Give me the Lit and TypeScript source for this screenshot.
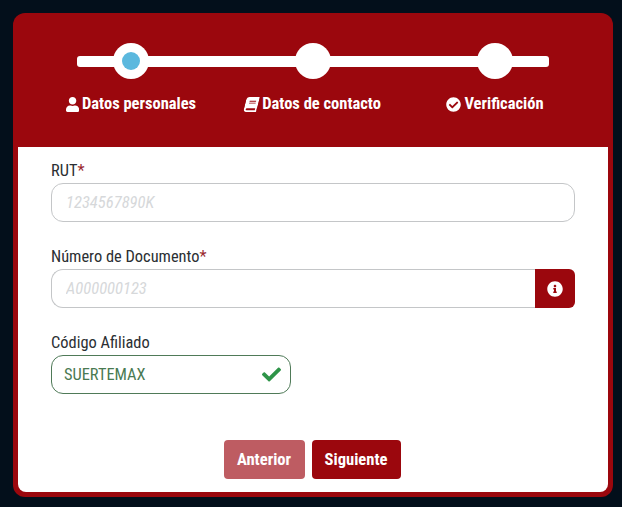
import { LitElement, html, css, svg } from "lit";
import { customElement } from "lit/decorators.js";

const user = svg`<path d="M224 256c70.7 0 128-57.3 128-128S294.7 0 224 0 96 57.3 96 128s57.3 128 128 128zm89.6 32h-16.7c-22.2 10.2-46.9 16-72.9 16s-50.6-5.8-72.9-16h-16.7C60.2 288 0 348.2 0 422.4V464c0 26.5 21.5 48 48 48h352c26.5 0 48-21.5 48-48v-41.6c0-74.2-60.2-134.4-134.4-134.4z"/>`;
const book = svg`<path d="M448 360V24c0-13.3-10.7-24-24-24H96C43 0 0 43 0 96v320c0 53 43 96 96 96h328c13.3 0 24-10.7 24-24v-16c0-7.5-3.5-14.3-8.9-18.7-4.2-15.4-4.2-59.3 0-74.7 5.4-4.3 8.9-11.1 8.9-18.6zM128 134c0-3.3 2.7-6 6-6h212c3.3 0 6 2.7 6 6v20c0 3.3-2.7 6-6 6H134c-3.3 0-6-2.7-6-6v-20zm0 64c0-3.3 2.7-6 6-6h212c3.3 0 6 2.7 6 6v20c0 3.3-2.7 6-6 6H134c-3.3 0-6-2.7-6-6v-20zm253.4 250H96c-17.7 0-32-14.3-32-32 0-17.6 14.4-32 32-32h285.4c-1.9 17.1-1.9 46.9 0 64z"/>`;
const checkCircle = svg`<path d="M504 256c0 136.967-111.033 248-248 248S8 392.967 8 256 119.033 8 256 8s248 111.033 248 248zM227.314 387.314l184-184c6.248-6.248 6.248-16.379 0-22.627l-22.627-22.627c-6.248-6.249-16.379-6.249-22.628 0L216 308.118l-70.059-70.059c-6.248-6.248-16.379-6.248-22.628 0l-22.627 22.627c-6.248 6.248-6.248 16.379 0 22.627l104 104c6.249 6.249 16.379 6.249 22.628.001z"/>`;
const info = svg`<path d="M256 8C119.043 8 8 119.083 8 256c0 136.997 111.043 248 248 248s248-111.003 248-248C504 119.083 392.957 8 256 8zm0 110c23.196 0 42 18.804 42 42s-18.804 42-42 42-42-18.804-42-42 18.804-42 42-42zm56 254c0 6.627-5.373 12-12 12h-88c-6.627 0-12-5.373-12-12v-24c0-6.627 5.373-12 12-12h12v-64h-12c-6.627 0-12-5.373-12-12v-24c0-6.627 5.373-12 12-12h64c6.627 0 12 5.373 12 12v100h12c6.627 0 12 5.373 12 12v24z"/>`;
const check = svg`<path d="M173.898 439.404l-166.4-166.4c-9.997-9.997-9.997-26.206 0-36.204l36.203-36.204c9.997-9.998 26.207-9.998 36.204 0L192 312.69 432.095 72.596c9.997-9.997 26.207-9.997 36.204 0l36.203 36.204c9.997 9.997 9.997 26.206 0 36.204l-294.4 294.401c-9.998 9.997-26.207 9.997-36.204-.001z"/>`;

@customElement("app-root")
export class AppRoot extends LitElement {
  static styles = css`
    :host {
      display: block;
      width: 622px;
      height: 507px;
      box-sizing: border-box;
      padding: 13px 9px 10px 13px;
      background: #030f1b;
      font-family: Roboto, "Liberation Sans", sans-serif;
      font-stretch: 85%;
      overflow: hidden;
    }
    .card {
      height: 484px;
      box-sizing: border-box;
      background: #9b070d;
      border-radius: 12px;
      padding: 0 5px 5px;
      display: flex;
      flex-direction: column;
    }
    .head {
      height: 134px;
      flex: none;
      box-sizing: border-box;
      padding: 30px 22px 0;
    }
    .track {
      position: relative;
      display: grid;
      grid-template-columns: repeat(3, 182px);
      height: 36px;
    }
    .track::before {
      content: "";
      position: absolute;
      left: 37px;
      width: 472px;
      top: 13px;
      height: 11px;
      border-radius: 3px;
      background: #fff;
    }
    .node {
      position: relative;
      justify-self: center;
      width: 36px;
      height: 36px;
      border-radius: 50%;
      background: #fff;
      display: flex;
      align-items: center;
      justify-content: center;
    }
    .dot {
      width: 18px;
      height: 18px;
      border-radius: 50%;
      background: #5bb8de;
    }
    .labels {
      display: grid;
      grid-template-columns: repeat(3, 182px);
      margin-top: 13px;
    }
    .step {
      display: flex;
      align-items: center;
      justify-content: center;
      gap: 3px;
      color: #fff;
      font-size: 16.5px;
      line-height: 24px;
      font-weight: 700;
      white-space: nowrap;
    }
    .step svg {
      height: 15px;
      width: auto;
      fill: #fff;
      flex: none;
    }
    .step svg.skew {
      transform: skewX(-14deg);
      margin-right: 1px;
    }
    .body {
      flex: 1;
      background: #fff;
      border-radius: 0 0 8px 8px;
      padding: 14px 33px 0;
      display: flex;
      flex-direction: column;
    }
    .field {
      height: 86px;
      flex: none;
    }
    label {
      display: block;
      height: 22px;
      font-size: 16.4px;
      line-height: 20px;
      color: #2b2f33;
    }
    label span {
      color: #9b2a30;
    }
    .control {
      display: flex;
      height: 39px;
    }
    input {
      flex: 1;
      min-width: 0;
      box-sizing: border-box;
      height: 39px;
      border: 1px solid #c4c6c8;
      border-radius: 12px;
      padding: 0 14px;
      font: 400 16.6px Roboto, "Liberation Sans", sans-serif;
      font-stretch: 85%;
      outline: none;
      background: #fff;
    }
    input::placeholder {
      color: #d6d8da;
      font-style: italic;
      opacity: 1;
    }
    .grouped input {
      border-radius: 12px 0 0 12px;
      border-right: 0;
    }
    .addon {
      width: 40px;
      flex: none;
      box-sizing: border-box;
      background: #9b070d;
      border-radius: 0 6px 6px 0;
      display: flex;
      align-items: center;
      justify-content: center;
    }
    .addon svg {
      width: 16px;
      height: 16px;
      fill: #fff;
    }
    .valid {
      position: relative;
      width: 240px;
    }
    .valid input {
      width: 100%;
      border-color: #4f7a58;
      color: #4a7a52;
      padding-left: 12px;
      padding-right: 38px;
      font-size: 16.4px;
    }
    .valid svg {
      position: absolute;
      right: 10px;
      top: 10px;
      width: 19px;
      height: 19px;
      fill: #2e9448;
    }
    .actions {
      display: flex;
      justify-content: center;
      gap: 7px;
      margin-top: 21px;
      margin-left: -2px;
    }
    button {
      height: 39px;
      border: 0;
      border-radius: 4px;
      color: #fff;
      background: #9b070d;
      font: 700 16.6px Roboto, "Liberation Sans", sans-serif;
      font-stretch: 85%;
      padding: 0;
    }
    .prev {
      width: 81px;
      background: #be5c62;
    }
    .next {
      width: 89px;
    }
  `;

  render() {
    return html`
      <div class="card">
        <div class="head">
          <div class="track">
            <div class="node"><div class="dot"></div></div>
            <div class="node"></div>
            <div class="node"></div>
          </div>
          <div class="labels">
            <div class="step"><svg viewBox="0 0 448 512">${user}</svg>Datos personales</div>
            <div class="step"><svg class="skew" viewBox="0 0 448 512">${book}</svg>Datos de contacto</div>
            <div class="step"><svg viewBox="0 0 512 512">${checkCircle}</svg>Verificación</div>
          </div>
        </div>
        <div class="body">
          <div class="field">
            <label>RUT<span>*</span></label>
            <div class="control"><input placeholder="1234567890K" /></div>
          </div>
          <div class="field">
            <label>Número de Documento<span>*</span></label>
            <div class="control grouped">
              <input placeholder="A000000123" />
              <div class="addon"><svg viewBox="0 0 512 512">${info}</svg></div>
            </div>
          </div>
          <div class="field">
            <label>Código Afiliado</label>
            <div class="control valid">
              <input value="SUERTEMAX" />
              <svg viewBox="0 0 512 512">${check}</svg>
            </div>
          </div>
          <div class="actions">
            <button class="prev">Anterior</button>
            <button class="next">Siguiente</button>
          </div>
        </div>
      </div>
    `;
  }
}
